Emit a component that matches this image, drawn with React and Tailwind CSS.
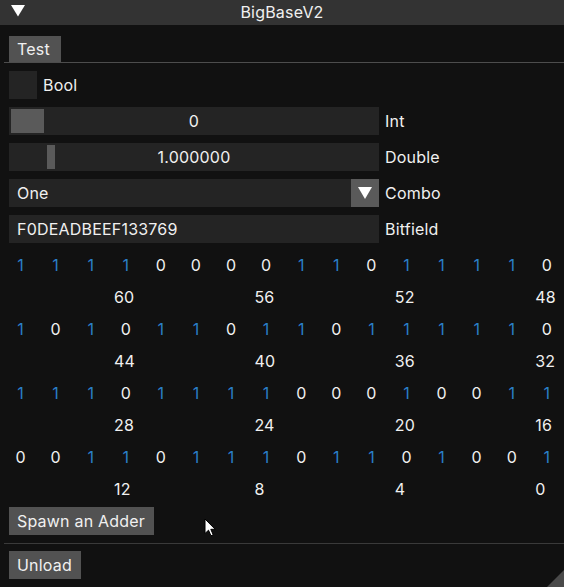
import React from "react";

const HEX = "F0DEADBEEF133769";
const BITS = HEX.split("").flatMap((h) =>
  parseInt(h, 16).toString(2).padStart(4, "0").split("")
);

function Frame({ children, className = "" }) {
  return (
    <div className={`relative h-[28px] w-[370px] bg-[#242424] ${className}`}>{children}</div>
  );
}

function Row({ label, children }) {
  return (
    <div className="flex h-[28px] items-center gap-[6px]">
      {children}
      <span className="leading-[28px]">{label}</span>
    </div>
  );
}

export default function App() {
  const rows = [0, 1, 2, 3];
  return (
    <div
      className="relative h-[587px] w-[564px] overflow-hidden bg-[#111111] text-[16px] tracking-[0.2px] text-[#f0f0f0]"
      style={{ fontFamily: "Inter, 'Noto Sans', sans-serif" }}
    >
      {/* Title bar */}
      <div className="relative flex h-[25px] items-center justify-center bg-[#333333]">
        <svg className="absolute left-[11px] top-[5px]" width="14" height="12" viewBox="0 0 14 12">
          <polygon points="0,0 14,0 7,11.5" fill="#ffffff" />
        </svg>
        <span className="leading-[25px]">BigBaseV2</span>
      </div>

      {/* Tab bar */}
      <div className="pl-[4px] pt-[11px]">
        <div className="pl-[5px]">
          <div className="flex h-[26px] w-[52px] items-center bg-[#525252] pl-[8px] leading-[26px]">
            Test
          </div>
        </div>
        <div className="h-[1px] bg-[#4d4d4d]" />
      </div>

      <div className="flex flex-col gap-[8px] px-[9px] pt-[8px]">
        {/* Bool */}
        <Row label="Bool">
          <div className="h-[28px] w-[28px] bg-[#242424]" />
        </Row>

        {/* Int */}
        <Row label="Int">
          <Frame className="flex items-center justify-center">
            <div className="absolute left-[2px] top-[2px] h-[24px] w-[33px] bg-[#5a5a5a]" />
            <span className="relative leading-[28px]">0</span>
          </Frame>
        </Row>

        {/* Double */}
        <Row label="Double">
          <Frame className="flex items-center justify-center">
            <div className="absolute left-[38px] top-[2px] h-[24px] w-[8px] bg-[#5a5a5a]" />
            <span className="relative leading-[28px]">1.000000</span>
          </Frame>
        </Row>

        {/* Combo */}
        <Row label="Combo">
          <Frame className="flex items-center">
            <span className="pl-[8px] leading-[28px]">One</span>
            <div className="absolute right-0 top-0 flex h-[28px] w-[28px] items-center justify-center bg-[#5a5a5a]">
              <svg width="14" height="12" viewBox="0 0 14 12">
                <polygon points="0,0 14,0 7,12" fill="#ffffff" />
              </svg>
            </div>
          </Frame>
        </Row>

        {/* Bitfield */}
        <Row label="Bitfield">
          <Frame className="flex items-center">
            <span className="pl-[8px] leading-[28px]">{HEX}</span>
          </Frame>
        </Row>
      </div>

      {/* Bits */}
      <div className="ml-[3px] mt-[6px]">
        {rows.map((r) => (
          <div key={r}>
            <div className="grid h-[32px] grid-cols-[repeat(16,35.1px)] items-center">
              {BITS.slice(r * 16, r * 16 + 16).map((b, i) => (
                <span
                  key={i}
                  className={`text-center leading-[32px] ${b === "1" ? "text-[#2a7fc8]" : "text-[#f0f0f0]"}`}
                >
                  {b}
                </span>
              ))}
            </div>
            <div className="grid h-[32px] grid-cols-[repeat(4,140.4px)] items-center">
              {[0, 1, 2, 3].map((k) => (
                <span key={k} className="pl-[111px] leading-[32px]">
                  {60 - r * 16 - k * 4}
                </span>
              ))}
            </div>
          </div>
        ))}
      </div>

      {/* Spawn */}
      <div className="px-[9px] pt-[2px]">
        <div className="flex h-[28px] w-[145px] items-center bg-[#525252] pl-[8px] leading-[28px]">
          Spawn an Adder
        </div>
      </div>

      <div className="ml-[4px] mt-[8px] h-[1px] bg-[#3a3a3a]" />

      <div className="px-[9px] pt-[7px]">
        <div className="flex h-[28px] w-[72px] items-center bg-[#525252] pl-[8px] leading-[28px]">
          Unload
        </div>
      </div>

      {/* Resize grip */}
      <svg className="absolute bottom-0 right-0" width="17" height="17" viewBox="0 0 17 17">
        <polygon points="17,0 17,17 0,17" fill="#4a4a4a" />
      </svg>

      {/* Mouse cursor */}
      <svg className="absolute left-[204px] top-[518px]" width="13" height="20" viewBox="0 0 13 20">
        <path
          d="M1 1 L1 15.5 L4.5 12.2 L7 17.8 L9.2 16.8 L6.8 11.3 L11.2 11.3 Z"
          fill="#ffffff"
          stroke="#000000"
          strokeWidth="1"
          strokeLinejoin="miter"
        />
      </svg>
    </div>
  );
}
